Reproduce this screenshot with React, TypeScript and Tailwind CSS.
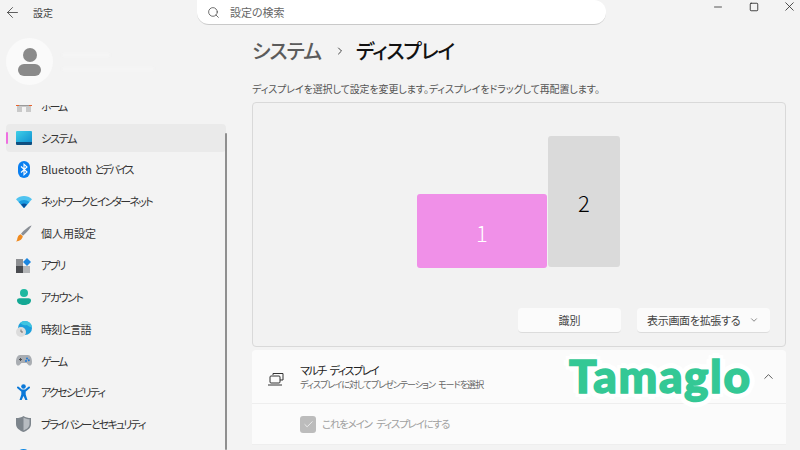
import { ArrowLeft, ChevronDown, ChevronRight, ChevronUp, Check, Minus, Search, Square, X } from "lucide-react";
import type { ReactNode } from "react";

const jp = "font-['Noto_Sans_CJK_JP','Noto_Sans',sans-serif] [font-feature-settings:'palt']";

function HomeIcon() {
  return (
    <svg width="16" height="16" viewBox="0 0 16 16">
      <path d="M0 6h16v2H0z" fill="#9a9a9a" />
      <path d="M0 6h3v2H0zM13 6h3v2h-3z" fill="#e8622c" />
      <path d="M1 8h14v6H1z" fill="#c9c9c9" />
      <path d="M6 9h4v5H6z" fill="#f3f3f3" />
    </svg>
  );
}

function SystemIcon() {
  return (
    <svg width="16" height="14" viewBox="0 0 16 14">
      <defs>
        <linearGradient id="sys" x1="0" y1="0" x2="1" y2="1">
          <stop offset="0" stopColor="#3fd0e8" />
          <stop offset="1" stopColor="#0f8fd0" />
        </linearGradient>
      </defs>
      <rect width="16" height="12" rx="1" fill="url(#sys)" />
      <path d="M0 11h16v2a1 1 0 0 1-1 1H1a1 1 0 0 1-1-1z" fill="#0f4f80" />
    </svg>
  );
}

function BluetoothIcon() {
  return (
    <svg width="12" height="17" viewBox="0 0 12 17">
      <rect width="12" height="17" rx="6" fill="#0a7ff0" />
      <path d="M3 5.500l6 5.500-3 2.800V3.200L9 6l-6 5.500" fill="none" stroke="#fff" strokeWidth="1.1" />
    </svg>
  );
}

function WifiIcon() {
  return (
    <svg width="16" height="12" viewBox="0 0 16 12">
      <path d="M0 3.200C4.500-1 11.500-1 16 3.200L8 12z" fill="#4fc3f0" />
      <path d="M2.600 6C5.600 3.300 10.400 3.300 13.400 6L8 12z" fill="#1a9be0" />
      <path d="M5 8.600c1.800-1.400 4.200-1.400 6 0L8 12z" fill="#0a4f9a" />
    </svg>
  );
}

function BrushIcon() {
  return (
    <svg width="16" height="17" viewBox="0 0 16 17">
      <path d="M15.500.5c.4.4-4 7-8.500 10.200L5 8.800C8.200 4.500 15-.1 15.500.5z" fill="#8a8f96" />
      <path d="M4.600 9.200l2.200 2.100c-.3 3-3.500 5.200-6.800 5.200 1.600-1.500 1-2.700 1.800-4.600.5-1.300 1.600-2.300 2.800-2.700z" fill="#f08a1e" />
    </svg>
  );
}

function AppsIcon() {
  return (
    <svg width="15" height="15" viewBox="0 0 15 15">
      <rect y="1" width="7" height="7" fill="#8d8f92" />
      <rect y="8" width="7" height="7" fill="#4a4c50" />
      <rect x="7" y="8" width="7" height="7" fill="#b4b6b8" />
      <path d="M11 0l4 4-4 4-4-4z" fill="#1b86e0" />
    </svg>
  );
}

function AccountIcon() {
  return (
    <svg width="14" height="16" viewBox="0 0 14 16">
      <circle cx="7" cy="4" r="4" fill="#1cb8a0" />
      <path d="M0 11.500C0 10 1 9.300 2.500 9.300h9c1.500 0 2.500.7 2.500 2.200C14 14.500 10.500 16 7 16s-7-1.500-7-4.500z" fill="#14a894" />
    </svg>
  );
}

function TimeIcon() {
  return (
    <svg width="16" height="16" viewBox="0 0 16 16">
      <circle cx="9" cy="7" r="7" fill="#1c9fdc" />
      <path d="M9 0a7 7 0 0 0-5 2c2 1 3 3 7 2 1 1 3 2 5 2.500A7 7 0 0 0 9 0z" fill="#3fc4e0" />
      <circle cx="5" cy="11" r="5" fill="#dcdcdc" />
      <path d="M5 8.500V11h2" fill="none" stroke="#6a6a6a" strokeWidth="0.9" />
    </svg>
  );
}

function GameIcon() {
  return (
    <svg width="16" height="11" viewBox="0 0 16 11">
      <path d="M4 0h8c2.500 0 4 3 4 7 0 3-1.500 4-3 3.500L10.500 8h-5L3 10.500C1.500 11 0 10 0 7c0-4 1.500-7 4-7z" fill="#a9adb2" />
      <path d="M3 4.500h3M4.500 3v3" stroke="#4a4c50" strokeWidth="1" />
      <circle cx="11" cy="3.500" r="1" fill="#1a78d8" />
      <circle cx="12.800" cy="5.300" r="1" fill="#1a78d8" />
      <circle cx="10" cy="6" r="1" fill="#1a78d8" />
    </svg>
  );
}

function AccessIcon() {
  return (
    <svg width="13" height="17" viewBox="0 0 13 17">
      <circle cx="6.500" cy="2.500" r="2.300" fill="#0a78d8" />
      <path d="M1 3.500l3.500 3h4L12 3.500" fill="none" stroke="#0a78d8" strokeWidth="2" strokeLinecap="round" />
      <path d="M4.300 6h4.400v4.500L10.500 16H8.300L6.500 12l-1.800 4H2.500l1.800-5.500z" fill="#0a78d8" />
    </svg>
  );
}

function ShieldIcon() {
  return (
    <svg width="15" height="16" viewBox="0 0 15 16">
      <path d="M7.500 0c2 1.500 4.500 2 7.500 2v6c0 4-3.500 6.500-7.500 8C3.500 14.500 0 12 0 8V2c3 0 5.500-.5 7.500-2z" fill="#7d858c" />
      <path d="M7.500 1.500c1.800 1.200 4 1.700 6 1.800V8c0 3-2.700 5.200-6 6.500z" fill="#b7bcc1" />
    </svg>
  );
}

function UpdateIcon() {
  return <div className="w-[15px] h-[15px] rounded-full bg-[#0a84e0]" />;
}

// kana in the original UI font runs narrower than Noto, so each row gets its own tracking
const navItems: { label: ReactNode; key: string; track: string; icon: ReactNode; active?: boolean }[] = [
  { key: "home", label: "ホーム", track: "tracking-[-2.2px]", icon: <HomeIcon /> },
  { key: "system", label: "システム", track: "tracking-[-1.2px]", icon: <SystemIcon />, active: true },
  {
    key: "bt",
    label: (
      <>
        Bluetooth <span className="tracking-[-2.4px]">とデバイス</span>
      </>
    ),
    track: "",
    icon: <BluetoothIcon />,
  },
  { key: "net", label: "ネットワークとインターネット", track: "tracking-[-1.75px]", icon: <WifiIcon /> },
  { key: "pers", label: "個人用設定", track: "", icon: <BrushIcon /> },
  { key: "apps", label: "アプリ", track: "tracking-[-2px]", icon: <AppsIcon /> },
  { key: "acct", label: "アカウント", track: "tracking-[-1.4px]", icon: <AccountIcon /> },
  { key: "time", label: "時刻と言語", track: "tracking-[-0.8px]", icon: <TimeIcon /> },
  { key: "game", label: "ゲーム", track: "tracking-[-2.2px]", icon: <GameIcon /> },
  { key: "access", label: "アクセシビリティ", track: "tracking-[-1.75px]", icon: <AccessIcon /> },
  { key: "privacy", label: "プライバシーとセキュリティ", track: "tracking-[-1.8px]", icon: <ShieldIcon /> },
  { key: "update", label: "Windows Update", track: "", icon: <UpdateIcon /> },
];

function NavRow({ label, track, icon, active }: { label: ReactNode; track: string; icon: ReactNode; active?: boolean }) {
  return (
    <div className={`relative flex items-center h-[28px] mb-[3.85px] ml-[6px] w-[220px] rounded ${active ? "bg-[#eaeaea]" : ""}`}>
      {active && <div className="absolute left-0 top-[8px] h-[12px] w-[2px] rounded bg-[#ee6fe0]" />}
      <div className="w-[35px] flex items-center justify-center pl-[1px] pr-[1px]">{icon}</div>
      <span className={`text-[11px] text-[#333] whitespace-nowrap ${track}`}>{label}</span>
    </div>
  );
}

function Sidebar() {
  return (
    <div className="relative w-[252px] shrink-0 flex flex-col">
      <div className="mt-[13px] ml-[6px] flex items-center">
        <div className="w-[47px] h-[47px] rounded-full bg-[#fafafa] flex flex-col items-center justify-center">
          <div className="w-[14px] h-[14px] rounded-full bg-[#8a8a8a]" />
          <div className="w-[23px] h-[12px] mt-[2px] rounded-[7px] bg-[#8a8a8a]" />
        </div>
        {/* account name is blurred out in the picture */}
        <div className="ml-[9px] flex flex-col gap-[10px] blur-[1px]">
          <div className="w-[48px] h-[4px] bg-[#f5f5f5]" />
          <div className="w-[92px] h-[4px] bg-[#f5f5f5]" />
        </div>
      </div>
      <div className="mt-[20px] flex-1 overflow-hidden">
        <div className="mt-[-13px]">
          {navItems.map((n) => (
            <NavRow key={n.key} label={n.label} track={n.track} icon={n.icon} active={n.active} />
          ))}
        </div>
      </div>
      <div className="absolute left-[225px] top-[108px] bottom-0 w-[2px] bg-[#8f8f8f] rounded" />
    </div>
  );
}

function App() {
  return (
    <div className={`relative w-[800px] h-[450px] overflow-hidden bg-[#f3f3f3] flex flex-col ${jp}`}>
      {/* Title bar */}
      <div className="h-[25px] shrink-0 flex items-center">
        <ArrowLeft size={17} strokeWidth={1.1} className="ml-[4px] text-[#333]" />
        <span className="ml-[12px] text-[10px] text-[#444]">設定</span>
        <div className="ml-[144px] w-[409px] h-[25px] rounded-b-[12px] rounded-tr-[12px] bg-white border-b border-[#c9c9c9] flex items-center">
          <Search size={13} strokeWidth={1.4} className="ml-[10px] text-[#444]" />
          <span className="ml-[10px] text-[11px] text-[#666]">設定の検索</span>
        </div>
        <div className="ml-auto self-start mt-[-1px] flex items-center text-[#222]">
          <Minus size={12} strokeWidth={1.5} />
          <Square size={10} strokeWidth={2} className="ml-[25px]" />
          <X size={15} strokeWidth={1.25} className="ml-[23px] mr-[3px]" />
        </div>
      </div>

      <div className="flex flex-1 min-h-0">
        <Sidebar />
        <div className="flex-1 min-w-0 pr-[14px]">
          <div className="h-[28px] mt-[12px] flex items-center text-[20px] leading-none tracking-[-1px]">
            <span className="text-[#5b5b5b] font-medium">システム</span>
            <ChevronRight size={12} strokeWidth={2} className="ml-[13px] text-[#444]" />
            <span className="ml-[10px] text-[#111] font-medium">ディスプレイ</span>
          </div>
          <p className="mt-[17px] text-[10px] leading-[14px] text-[#555] tracking-[-0.1px]">
            ディスプレイを選択して設定を変更します。ディスプレイをドラッグして再配置します。
          </p>

          {/* Arrangement panel */}
          <div className="relative mt-[6px] h-[245px] border border-[#d9d9d9] rounded bg-[#f2f2f2]">
            <div className="absolute left-[164px] top-[91px] w-[130px] h-[74px] pt-[2px] rounded-[3px] bg-[#f090e8] flex items-center justify-center text-[22px] font-light text-white">
              1
            </div>
            <div className="absolute left-[295px] top-[33px] w-[72px] h-[131px] pt-[2px] rounded-[3px] bg-[#dadada] flex items-center justify-center text-[22px] font-light text-black">
              2
            </div>
            <div className="absolute right-[15px] bottom-[13px] flex gap-[16px] text-[11px] text-[#444]">
              <div className="w-[103px] h-[25px] rounded bg-[#fbfbfb] border-b border-[#dcdcdc] flex items-center justify-center">
                識別
              </div>
              <div className="w-[133px] h-[25px] rounded bg-[#fbfbfb] border-b border-[#dcdcdc] flex items-center pl-[10px] tracking-[-0.3px]">
                表示画面を拡張する
                <ChevronDown size={10} strokeWidth={1.5} className="ml-auto mr-[11px]" />
              </div>
            </div>
          </div>

          {/* Multi display card */}
          <div className="mt-[3px] rounded-t bg-[#fbfbfb]">
            <div className="h-[54px] flex items-center border-b border-[#eeeeee]">
              <svg width="16" height="14" viewBox="0 0 16 14" fill="none" stroke="#333" strokeWidth="1" className="ml-[16px] mt-[4px]">
                <path d="M5 3V1.500h10V8h-3" />
                <rect x="2" y="4" width="10" height="7" rx="1" />
                <path d="M0 13h14" />
              </svg>
              <div className="ml-[16px] flex flex-col">
                <span className="text-[11px] leading-[15px] text-[#222] tracking-[-1.5px] [word-spacing:3px]">マルチ ディスプレイ</span>
                <span className="text-[9px] leading-[12px] mt-[1px] text-[#666] tracking-[-0.95px] [word-spacing:2px]">ディスプレイに対してプレゼンテーション モードを選択</span>
              </div>
              <ChevronUp size={15} strokeWidth={1.25} className="ml-auto mr-[10px] text-[#333]" />
            </div>
            <div className="h-[41px] flex items-center border-b border-[#eeeeee]">
              <div className="ml-[48px] w-[16px] h-[17px] rounded-[3px] bg-[#bcbcbc] flex items-center justify-center">
                <Check size={11} strokeWidth={1.5} className="text-white" />
              </div>
              <span className="ml-[6px] text-[10.5px] text-[#a0a0a0] tracking-[-1.2px] [word-spacing:3px]">これをメイン ディスプレイにする</span>
            </div>
          </div>
        </div>
      </div>

      {/* Watermark */}
      <div className="absolute left-[569px] top-[348px] font-['Lato',sans-serif] font-black text-[46px] leading-[55px] tracking-[1.6px] text-[#34c895] [-webkit-text-stroke:1.5px_#34c895] [text-shadow:6px_0_1px_white,-6px_0_1px_white,0_6px_1px_white,0_-6px_1px_white,4px_4px_1px_white,-4px_4px_1px_white,4px_-4px_1px_white,-4px_-4px_1px_white]">
        Tamaglo
      </div>
    </div>
  );
}

export default App;
